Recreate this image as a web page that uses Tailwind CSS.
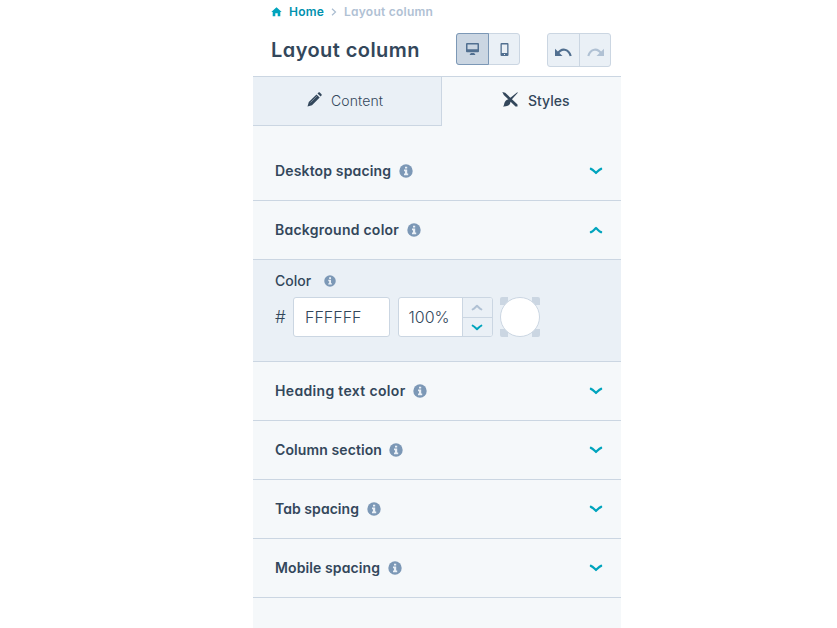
<!DOCTYPE html>
<html lang="en">
<head>
    <meta charset="UTF-8">
    <meta name="viewport" content="width=device-width, initial-scale=1.0">
    <title>Layout column</title>
    <script src="https://cdn.jsdelivr.net/npm/@tailwindcss/browser@4"></script>
</head>
<body class="bg-white font-['Inter','Liberation_Sans',sans-serif] [font-feature-settings:'cv11'] text-[#33475b]">
    <!-- Shared icons -->
    <svg class="hidden">
        <symbol id="info" viewBox="0 0 14 14">
            <circle cx="7" cy="7" r="6.7" fill="#7c98b6"/>
            <path d="M6 2.700h2.200v1.900H6zM5 5.600H8.200v4h1v1.600H5V9.600h1V7.200H5z" fill="#eaf0f6"/>
        </symbol>
        <symbol id="chevron" viewBox="0 0 14 8">
            <path d="M1.900 1.800C3.800 2.500 5.200 4.400 7 6 8.800 4.400 10.200 2.500 12.100 1.800" fill="none" stroke="currentColor" stroke-width="2.300" stroke-linecap="round" stroke-linejoin="round"/>
        </symbol>
    </svg>

    <div class="w-[368px] h-[628px] ml-[253px] flex flex-col overflow-hidden">
        <!-- Header -->
        <header class="h-[76px] shrink-0 pl-[18px]">
            <nav class="flex items-center h-6 text-xs font-semibold leading-6">
                <svg class="w-[11px] h-[10px] shrink-0" viewBox="0 0 11 10" fill="#00a4bd"><path d="M5.500.3 10.700 5H9.300v4.300H6.700V6.300H4.300v3H1.700V5H.3z"/></svg>
                <a href="#" class="ml-[7px] w-[35px] text-[#0091ae] tracking-[0.2px]">Home</a>
                <svg class="w-[6px] h-[8px] ml-[7px] shrink-0" viewBox="0 0 6 8"><path d="M1 .8 4.500 4 1 7.200" fill="none" stroke="#a9bcd0" stroke-width="1.200"/></svg>
                <span class="ml-[7px] text-[#b0c1d4] tracking-[0.25px]">Layout column</span>
            </nav>
            <div class="flex h-[52px]">
                <h1 class="w-[185px] pt-[11px] text-[20px] leading-[30px] font-semibold tracking-[0.43px] whitespace-nowrap">Layout column</h1>
                <div class="flex w-[64px] h-8 mt-[9px] rounded-[3px] border border-[#cbd6e2] bg-[#eaf0f6]">
                    <button class="flex items-center justify-center w-[33px] h-8 -mt-px -ml-px rounded-l-[3px] border border-[#7c98b6] bg-[#cbd6e2]">
                        <svg class="w-[13px] h-[12px]" viewBox="0 0 13 12" fill="#516f90"><path fill-rule="evenodd" d="M1 0h11a1 1 0 0 1 1 1v7.300a1 1 0 0 1-1 1H1a1 1 0 0 1-1-1V1a1 1 0 0 1 1-1zm.5 1.500v4.800h10V1.500zM5 10h3l1.200 1.200v.8H3.800v-.8z"/></svg>
                    </button>
                    <button class="flex items-center justify-center w-[30px] h-[30px]">
                        <svg class="w-[9px] h-[13px]" viewBox="0 0 9 13" fill="#516f90"><path fill-rule="evenodd" d="M1.500 0h6a1 1 0 0 1 1 1v11a1 1 0 0 1-1 1h-6a1 1 0 0 1-1-1V1a1 1 0 0 1 1-1zm.3 1.500v8.400h5.400V1.500zm2.200 9.400v1h1v-1z"/></svg>
                    </button>
                </div>
                <div class="flex w-16 h-[34px] mt-[9px] ml-[27px] rounded-[3px] border border-[#cbd6e2] bg-[#eaf0f6]">
                    <button class="flex items-center justify-center w-8 border-r border-[#cbd6e2] pt-[5px]">
                        <svg class="w-[17px] h-[9px]" viewBox="0 0 17 9"><path d="M2.500 5.800C6.500-.5 13.500.5 15.700 8" fill="none" stroke="#516f90" stroke-width="2.200"/><path d="M0 .7V8h7.500z" fill="#516f90"/></svg>
                    </button>
                    <button class="flex items-center justify-center w-[30px] pt-[5px]">
                        <svg class="w-[17px] h-[9px]" viewBox="0 0 17 9"><path d="M14.500 5.800C10.500-.5 3.500.5 1.300 8" fill="none" stroke="#b0c1d4" stroke-width="2.200"/><path d="M17 .7V8H9.500z" fill="#b0c1d4"/></svg>
                    </button>
                </div>
            </div>
        </header>

        <!-- Tabs -->
        <div class="flex h-[50px] shrink-0 border-t border-[#cbd6e2] bg-[#f5f8fa] text-sm">
            <button class="flex w-[189px] pl-[54px] border-r border-b border-[#cbd6e2] bg-[#eaf0f6]">
                <svg class="w-[15px] h-[15px] mt-[15px]" viewBox="0 0 15 15" fill="#33475b"><path d="M.5 14.500 1.800 10 9.500 2.400l3.200 3.100L5 13.200zM10.500 1.500l1-1c.4-.4.9-.4 1.300 0l1.700 1.700c.4.400.4.900 0 1.300l-.9 1z"/><path d="m3.500 10.500 6.500-6.400" stroke="#8a99a8" stroke-width=".8"/></svg>
                <span class="ml-[9px] mt-[14px] leading-5 font-light tracking-[0.1px]">Content</span>
            </button>
            <button class="flex pl-[60px]">
                <svg class="w-[16px] h-[15px] mt-[15px]" viewBox="0 0 16 15" fill="#33475b"><path d="M.3 0 3.200.7 15.500 12.500v2h-2L1.800 3zM15.300.2l.5.6-6.300 7-1.700-1.600zM6.700 7.300l1.800 1.800c.2 3.500-2.300 5.600-7.500 5.400 1.500-1.200.8-3 2-4.800.9-1.400 2.200-2 3.700-2.400z"/></svg>
                <span class="ml-[10px] mt-[14px] leading-5 font-medium">Styles</span>
            </button>
        </div>

        <!-- Accordion -->
        <main class="grow pt-[16px] bg-[#f5f8fa] text-sm font-semibold">
            <div class="flex items-center h-[59px] pl-[22px] pr-[18px] border-b border-[#cbd6e2]">
                <span class="w-[123.500px] tracking-[0.15px]">Desktop spacing</span>
                <svg class="w-[14px] h-[14px]"><use href="#info"/></svg>
                <svg class="w-[14px] h-[8px] ml-auto text-[#00a4bd]"><use href="#chevron"/></svg>
            </div>
            <div class="flex items-center h-[59px] pl-[22px] pr-[18px] border-b border-[#cbd6e2]">
                <span class="w-[131.500px] tracking-[0.25px]">Background color</span>
                <svg class="w-[14px] h-[14px]"><use href="#info"/></svg>
                <svg class="w-[14px] h-[8px] ml-auto text-[#00a4bd] rotate-180"><use href="#chevron"/></svg>
            </div>
            <div class="h-[102px] pl-[22px] pt-[11px] border-b border-[#cbd6e2] bg-[#eaf0f6] font-medium">
                <div class="flex items-center h-5">
                    <span class="w-[49px]">Color</span>
                    <svg class="w-[12px] h-[12px]"><use href="#info"/></svg>
                </div>
                <div class="flex items-center h-10 mt-[6px] font-light text-base">
                    <span class="w-[18px] pt-[2px] text-[17px]">#</span>
                    <div class="w-[97px] h-10 pl-[11px] rounded-[3px] border border-[#cbd6e2] bg-white leading-[38px]">FFFFFF</div>
                    <div class="flex w-[95px] h-10 ml-[7.500px] rounded-[3px] border border-[#cbd6e2] bg-white overflow-hidden">
                        <span class="w-[63px] pl-[10px] leading-[38px]">100%</span>
                        <div class="flex flex-col w-[30px] border-l border-[#cbd6e2] bg-[#eaf0f6]">
                            <button class="flex items-center justify-center h-5 border-b border-[#cbd6e2]"><svg class="w-[12px] h-[7px] text-[#b0c1d4] rotate-180"><use href="#chevron"/></svg></button>
                            <button class="flex items-center justify-center h-[18px]"><svg class="w-[12px] h-[7px] text-[#00a4bd]"><use href="#chevron"/></svg></button>
                        </div>
                    </div>
                    <svg class="w-10 h-10 ml-[7.500px]" viewBox="0 0 40 40"><path d="M2 0h6v8H0V2a2 2 0 0 1 2-2zM32 0h6a2 2 0 0 1 2 2v6h-8zM0 32h8v8H2a2 2 0 0 1-2-2zM32 32h8v6a2 2 0 0 1-2 2h-6z" fill="#cbd6e2"/><circle cx="20" cy="20" r="19.500" fill="#fff" stroke="#cbd6e2"/></svg>
                </div>
            </div>
            <div class="flex items-center h-[59px] pl-[22px] pr-[18px] border-b border-[#cbd6e2]">
                <span class="w-[137.500px] tracking-[0.33px]">Heading text color</span>
                <svg class="w-[14px] h-[14px]"><use href="#info"/></svg>
                <svg class="w-[14px] h-[8px] ml-auto text-[#00a4bd]"><use href="#chevron"/></svg>
            </div>
            <div class="flex items-center h-[59px] pl-[22px] pr-[18px] border-b border-[#cbd6e2]">
                <span class="w-[114px] tracking-[0.1px]">Column section</span>
                <svg class="w-[14px] h-[14px]"><use href="#info"/></svg>
                <svg class="w-[14px] h-[8px] ml-auto text-[#00a4bd]"><use href="#chevron"/></svg>
            </div>
            <div class="flex items-center h-[59px] pl-[22px] pr-[18px] border-b border-[#cbd6e2]">
                <span class="w-[91.500px] tracking-[0.05px]">Tab spacing</span>
                <svg class="w-[14px] h-[14px]"><use href="#info"/></svg>
                <svg class="w-[14px] h-[8px] ml-auto text-[#00a4bd]"><use href="#chevron"/></svg>
            </div>
            <div class="flex items-center h-[59px] pl-[22px] pr-[18px] border-b border-[#cbd6e2]">
                <span class="w-[112.500px] tracking-[0.1px]">Mobile spacing</span>
                <svg class="w-[14px] h-[14px]"><use href="#info"/></svg>
                <svg class="w-[14px] h-[8px] ml-auto text-[#00a4bd]"><use href="#chevron"/></svg>
            </div>
        </main>
    </div>
</body>
</html>
